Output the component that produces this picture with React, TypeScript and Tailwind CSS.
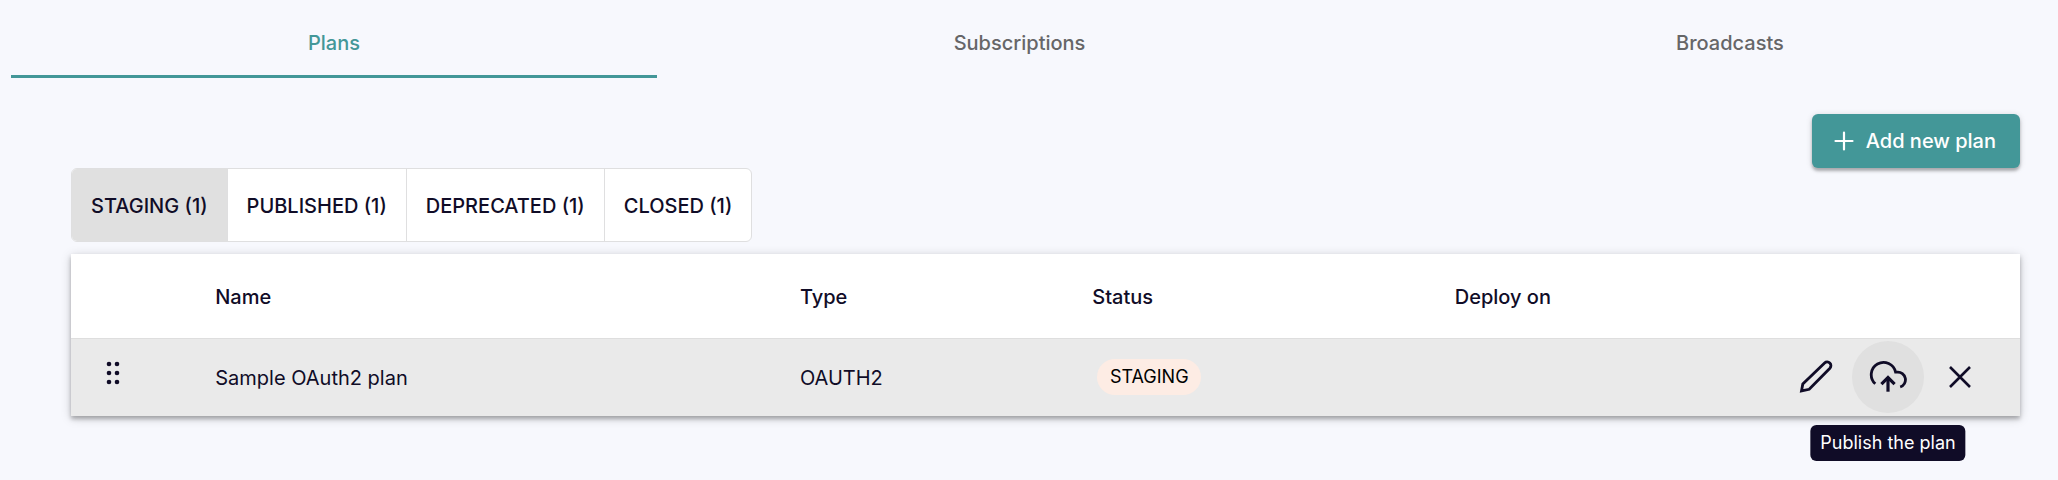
import { useState } from "react";
import type { ReactNode } from "react";

const tabs = ["Plans", "Subscriptions", "Broadcasts"];
const filters = ["STAGING (1)", "PUBLISHED (1)", "DEPRECATED (1)", "CLOSED (1)"];

function PlusIcon() {
  return (
    <svg width="20" height="20" viewBox="0 0 20 20" fill="none" stroke="currentColor" strokeWidth="2.2" strokeLinecap="round" aria-hidden="true">
      <path d="M10 1.5v17M1.5 10h17" />
    </svg>
  );
}

function DragIcon() {
  return (
    <svg width="16" height="26" viewBox="0 0 16 26" fill="currentColor" aria-hidden="true">
      <circle cx="4" cy="4" r="2.3" />
      <circle cx="12" cy="4" r="2.3" />
      <circle cx="4" cy="13" r="2.3" />
      <circle cx="12" cy="13" r="2.3" />
      <circle cx="4" cy="22" r="2.3" />
      <circle cx="12" cy="22" r="2.3" />
    </svg>
  );
}

function PencilIcon() {
  return (
    <svg width="36" height="36" viewBox="0 0 36 36" fill="none" stroke="currentColor" strokeWidth="2.8" aria-hidden="true">
      <path d="M3.5 31.9l1.3-7L26.6 3.9a3.75 3.75 0 0 1 5.3 5.3L11.2 30.3z" />
    </svg>
  );
}

function CloudUploadIcon() {
  return (
    <svg width="38" height="38" viewBox="0 0 38 38" fill="none" stroke="currentColor" strokeWidth="2.8" aria-hidden="true">
      <path d="M6.3 25.8A12.3 12.3 0 1 1 26.6 14.2h1.6a7.6 7.6 0 0 1 3 14.8" />
      <path d="M19 33.7V19" strokeWidth="3.2" />
      <path d="M12.4 26.2L19 19.6l6.6 6.6" strokeWidth="3.2" />
    </svg>
  );
}

function CloseIcon() {
  return (
    <svg width="24" height="24" viewBox="0 0 24 24" fill="none" stroke="currentColor" strokeWidth="2.6" aria-hidden="true">
      <path d="M2 2l20 20M22 2L2 22" />
    </svg>
  );
}

function IconButton({ label, active = false, children }: { label: string; active?: boolean; children: ReactNode }) {
  return (
    <button
      type="button"
      aria-label={label}
      className={`relative flex size-[72px] items-center justify-center rounded-full ${active ? "bg-[#e0e0e0]" : ""}`}
    >
      {children}
    </button>
  );
}

export default function App() {
  const [tab, setTab] = useState(0);
  const [filter, setFilter] = useState(0);

  return (
    <main className="min-h-screen overflow-hidden bg-[#f7f8fd] font-['Inter',sans-serif] text-xl text-[#100c27]">
      <nav role="tablist" className="-mr-5 grid grid-cols-[646fr_725fr_696fr] pl-[11px]">
        {tabs.map((name, i) => (
          <button
            key={name}
            type="button"
            role="tab"
            aria-selected={tab === i}
            onClick={() => setTab(i)}
            className={`h-[78px] border-b-[3px] pt-2.5 font-medium ${
              tab === i ? "border-[#439798] text-[#439798]" : "border-transparent text-[#666668]"
            }`}
          >
            {name}
          </button>
        ))}
      </nav>

      <section className="pt-9 pr-[38px] pb-16 pl-[71px]">
        <div className="flex justify-end">
          <button
            type="button"
            className="flex h-[54px] items-center gap-3 rounded-md bg-[#439798] pr-6 pl-[22px] font-medium text-white shadow-[0_3px_3px_rgba(0,0,0,0.25),0_1px_6px_rgba(0,0,0,0.15)]"
          >
            <PlusIcon />
            Add new plan
          </button>
        </div>

        <div className="flex">
          <div role="group" aria-label="Plan status" className="flex h-[74px] overflow-hidden rounded-md border border-[#dfdfe0] bg-white">
            {filters.map((name, i) => (
              <button
                key={name}
                type="button"
                aria-pressed={filter === i}
                onClick={() => setFilter(i)}
                className={`border-l border-[#dfdfe0] px-[19px] pt-0.5 font-medium first:border-l-0 ${filter === i ? "bg-[#e0e0e0]" : ""}`}
              >
                {name}
              </button>
            ))}
          </div>
        </div>

        <table className="mt-3 w-full table-fixed border-collapse bg-white text-left shadow-[0_3px_4px_rgba(0,0,0,0.25),0_2px_10px_rgba(0,0,0,0.18)]">
          <colgroup>
            <col className="w-[7.4%]" />
            <col className="w-[30%]" />
            <col className="w-[15%]" />
            <col className="w-[18.6%]" />
            <col className="w-[29%]" />
          </colgroup>
          <thead>
            <tr className="h-[84px] border-b border-[#dedede]">
              <th aria-label="Order" />
              <th className="pt-0.5 font-medium">Name</th>
              <th className="pt-0.5 font-medium">Type</th>
              <th className="pt-0.5 font-medium">Status</th>
              <th className="pt-0.5 font-medium">Deploy on</th>
            </tr>
          </thead>
          <tbody>
            <tr className="h-[78px] bg-[#eaeaea]">
              <td className="pb-2 pl-[34px]">
                <button type="button" aria-label="Reorder plan" className="flex cursor-grab">
                  <DragIcon />
                </button>
              </td>
              <td className="pt-0.5">Sample OAuth2 plan</td>
              <td className="pt-0.5">OAUTH2</td>
              <td className="pl-[5px]">
                <span className="flex h-9 w-26 items-center justify-center rounded-full bg-[#fdece4] text-lg text-black">STAGING</span>
              </td>
              <td className="pr-6">
                <div className="flex justify-end">
                  <IconButton label="Edit the plan">
                    <PencilIcon />
                  </IconButton>
                  <div className="relative">
                    <IconButton label="Publish the plan" active>
                      <CloudUploadIcon />
                    </IconButton>
                    <span
                      role="tooltip"
                      className="absolute top-full left-1/2 mt-3 flex h-9 -translate-x-1/2 items-center rounded-md bg-[#100c27] px-2.5 text-lg whitespace-nowrap text-white"
                    >
                      Publish the plan
                    </span>
                  </div>
                  <IconButton label="Close the plan">
                    <CloseIcon />
                  </IconButton>
                </div>
              </td>
            </tr>
          </tbody>
        </table>
      </section>
    </main>
  );
}
